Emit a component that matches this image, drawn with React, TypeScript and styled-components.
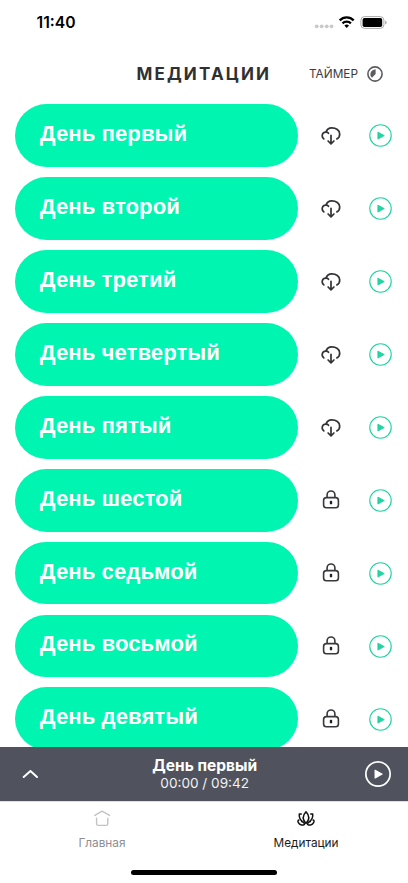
import React from 'react';
import styled, { createGlobalStyle } from 'styled-components';

const GlobalStyle = createGlobalStyle`
  * { box-sizing: border-box; }
  html, body { margin: 0; padding: 0; background: #fff; }
  body { font-family: Inter, 'Liberation Sans', sans-serif; overflow: hidden; }
  button { border: 0; padding: 0; margin: 0; background: none; font: inherit; color: inherit; }
  svg { display: block; flex: none; }
`;

const Screen = styled.div`
  width: 408px;
  height: 883px;
  display: flex;
  flex-direction: column;
  background: #fff;
  overflow: hidden;
`;

const StatusBar = styled.div`
  height: 45px;
  flex: none;
  display: flex;
  justify-content: space-between;
  padding: 0 20px 0 36.5px;
`;

const Clock = styled.span`
  font-size: 15.7px;
  font-weight: 600;
  line-height: 20px;
  padding-top: 13px;
  color: #000;
`;

const Header = styled.header`
  height: 59.3px;
  flex: none;
  display: grid;
  grid-template-columns: 136.5px 172.5px 1fr;
  align-items: center;
  padding-bottom: 2px;
`;

const Title = styled.h1`
  grid-column: 2;
  margin: 0;
  font-size: 17px;
  line-height: 22px;
  font-weight: 700;
  letter-spacing: 2.15px;
  color: #303033;
  white-space: nowrap;
`;

const Timer = styled.button`
  display: flex;
  align-items: center;
  gap: 9.5px;
  font-size: 11.8px;
  line-height: 16px;
  color: #3c3c40;
`;

const List = styled.main`
  height: 642.4px;
  flex: none;
  overflow: hidden;
`;

const Row = styled.div`
  display: grid;
  grid-template-columns: 283.4px 65px 34px;
  align-items: center;
  height: 62.8px;
  margin: 0 0 10.1px 15px;
`;

const Pill = styled.button`
  height: 100%;
  border-radius: 32px;
  padding: 0 0 3px 24.8px;
  background: #00f5b1;
  color: #fff;
  font-family: 'Liberation Sans', sans-serif;
  font-size: 22.1px;
  font-weight: 700;
  line-height: 28px;
  letter-spacing: 0.08px;
  text-align: left;
`;

const IconCell = styled.div`
  display: flex;
  justify-content: center;
  padding-top: 0.6px;
`;

const Player = styled.section`
  height: 54.3px;
  flex: none;
  display: grid;
  grid-template-columns: 60px 1fr 60px;
  align-items: center;
  justify-items: center;
  background: #50535d;
  color: #fff;
`;

const TrackInfo = styled.div`
  display: flex;
  flex-direction: column;
  align-items: center;
  padding: 2px 0 0 1.4px;
`;

const TrackName = styled.div`
  font-size: 15.5px;
  line-height: 18px;
  font-weight: 700;
`;

const TrackTime = styled.div`
  font-size: 13.6px;
  line-height: 17px;
  color: #f1f1f3;
`;

const Tabs = styled.nav`
  height: 69px;
  flex: none;
  display: grid;
  grid-template-columns: 1fr 1fr;
  border-top: 1px solid #dedee0;
`;

const Tab = styled.button<{ $active?: boolean }>`
  display: flex;
  flex-direction: column;
  align-items: center;
  justify-content: flex-start;
  gap: 6px;
  padding-top: 7px;
  font-size: 11.8px;
  line-height: 16px;
  color: ${(p) => (p.$active ? '#1c1c1e' : '#8e8e92')};
`;

const HomeIndicator = styled.div`
  width: 146px;
  height: 5px;
  flex: none;
  margin: 0 auto;
  border-radius: 3px;
  background: #000;
`;

const StatusIcons = () => (
  <svg width="74" height="45" viewBox="0 0 74 45">
    <g fill="#c9c9cb">
      <circle cx="2.7" cy="26.3" r="1.9" />
      <circle cx="7.7" cy="26.3" r="1.9" />
      <circle cx="12.7" cy="26.3" r="1.9" />
      <circle cx="17.5" cy="26.3" r="1.9" />
    </g>
    <g fill="none" stroke="#000" strokeWidth="2.3">
      <path d="M25.7 20.4a9.6 9.6 0 0 1 14 0" />
      <path d="M28.5 23.4a5.8 5.8 0 0 1 8.4 0" />
    </g>
    <path d="M32.7 28l-2.3-2.4a3.5 3.5 0 0 1 4.6 0z" fill="#000" />
    <rect x="46.9" y="16.6" width="23" height="11.8" rx="3.6" fill="none" stroke="#aaa" />
    <rect x="48.6" y="18" width="19.6" height="9" rx="1.8" fill="#000" />
    <path d="M71.3 20.4v4a2.2 2.2 0 0 0 0-4z" fill="#999" />
  </svg>
);

const TimerIcon = () => (
  <svg width="16" height="16" viewBox="0 0 16 16">
    <circle cx="8" cy="8" r="7.1" fill="none" stroke="#5b5b60" strokeWidth="1.6" />
    <path d="M8.6 3.2V8L5 11.8C2 8.9 3.1 3.9 8.6 3.2z" fill="#5b5b60" />
  </svg>
);

const CloudIcon = () => (
  <svg width="20" height="20" viewBox="0 0 20 20" fill="none" stroke="#333337" strokeWidth="1.7" strokeLinecap="round" strokeLinejoin="round">
    <path d="M2.8 12.9C.2 10.9.8 6.5 4.6 6.2C5.9 6 6.9 6.5 7.5 7.3" />
    <path d="M4.9 6.2C5.8 3.4 7.9 1.8 10.8 1.8C15 1.8 18.7 4.2 18.7 7.9C18.7 10.6 17.5 12.2 15.9 12.9" />
    <path d="M10 9.3v8.4M7.1 15l2.9 2.8l2.9-2.8" />
  </svg>
);

const LockIcon = () => (
  <svg width="20" height="20" viewBox="0 0 20 20" fill="none" stroke="#39393d" strokeWidth="1.6">
    <rect x="2.6" y="7.6" width="14.8" height="10.2" rx="2.8" />
    <path d="M6.1 7.4V4.9a3.9 3.9 0 0 1 7.8 0v2.5" />
    <rect x="8.8" y="10.8" width="2.4" height="3.5" rx="0.9" fill="#222" stroke="none" />
  </svg>
);

const PlayIcon = ({ size, color, stroke }: { size: number; color: string; stroke: number }) => (
  <svg width={size} height={size} viewBox="0 0 24 24">
    <circle cx="12" cy="12" r="11.2" fill="none" stroke={color} strokeWidth={stroke} />
    <path d="M9.3 8.5v7.2l6.6-3.6z" fill={color} stroke={color} strokeWidth="1" strokeLinejoin="round" />
  </svg>
);

const ChevronUp = () => (
  <svg width="16" height="10" viewBox="0 0 16 10" fill="none" stroke="#fff" strokeWidth="2" strokeLinecap="round" strokeLinejoin="round">
    <path d="M1.7 8L8.5 2l6.5 6" />
  </svg>
);

const HomeIcon = () => (
  <svg width="18" height="20" viewBox="0 0 18 20" fill="none" stroke="#c3c3c6" strokeWidth="1.4" strokeLinecap="round" strokeLinejoin="round">
    <path d="M1.8 6.4L9 2.2L16.6 6.4" />
    <path d="M3.6 9.2v5.5a1.7 1.7 0 0 0 1.7 1.7h7.8a1.7 1.7 0 0 0 1.7-1.7v-5.5" />
  </svg>
);

const LotusIcon = () => (
  <svg width="18" height="20" viewBox="0 0 18 20" fill="none" stroke="#111" strokeWidth="1.5" strokeLinecap="round" strokeLinejoin="round">
    <path d="M9 2.8C5.6 6.4 5.6 10.8 9 14.4C12.4 10.8 12.4 6.4 9 2.8z" />
    <path d="M4.2 5.1L2.3 4.9C2 8 2.8 10.3 4.8 11.9M13.8 5.1l1.9-.2c.3 3.1-.5 5.4-2.5 7" />
    <path d="M1.9 11.1C.7 11.4.8 12.6 1.4 13.6C2.7 16.1 5.9 16.7 7.4 15.4C7.6 14.2 6.2 12.9 4.6 12.5M16.1 11.1c1.2.3 1.1 1.5.5 2.5c-1.3 2.5-4.5 3.1-6 1.8c-.2-1.2 1.2-2.5 2.8-2.9" />
  </svg>
);

const days = [
  { name: 'День первый', locked: false },
  { name: 'День второй', locked: false },
  { name: 'День третий', locked: false },
  { name: 'День четвертый', locked: false },
  { name: 'День пятый', locked: false },
  { name: 'День шестой', locked: true },
  { name: 'День седьмой', locked: true },
  { name: 'День восьмой', locked: true },
  { name: 'День девятый', locked: true },
];

export default function App() {
  return (
    <>
      <GlobalStyle />
      <Screen>
        <StatusBar>
          <Clock>11:40</Clock>
          <StatusIcons />
        </StatusBar>
        <Header>
          <Title>МЕДИТАЦИИ</Title>
          <Timer>
            ТАЙМЕР
            <TimerIcon />
          </Timer>
        </Header>
        <List>
          {days.map((day) => (
            <Row key={day.name}>
              <Pill>{day.name}</Pill>
              <IconCell>{day.locked ? <LockIcon /> : <CloudIcon />}</IconCell>
              <IconCell>
                <PlayIcon size={23} color="#25d3a2" stroke={1.2} />
              </IconCell>
            </Row>
          ))}
        </List>
        <Player>
          <ChevronUp />
          <TrackInfo>
            <TrackName>День первый</TrackName>
            <TrackTime>00:00 / 09:42</TrackTime>
          </TrackInfo>
          <PlayIcon size={26} color="#fff" stroke={1.6} />
        </Player>
        <Tabs>
          <Tab>
            <HomeIcon />
            Главная
          </Tab>
          <Tab $active>
            <LotusIcon />
            Медитации
          </Tab>
        </Tabs>
        <HomeIndicator />
      </Screen>
    </>
  );
}
